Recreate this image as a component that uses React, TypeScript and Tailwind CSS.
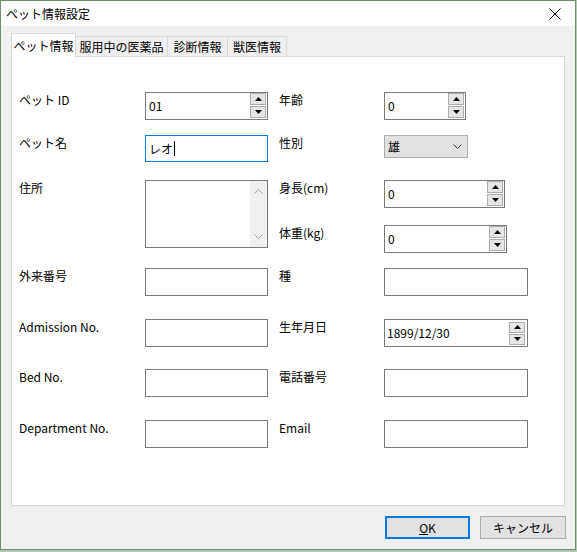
import React from 'react';

const font = { fontFamily: '"Noto Sans CJK JP", "Noto Sans", sans-serif' };

function SpinButtons() {
  return (
    <div className="flex flex-col gap-[1px] pt-[0px] pr-[1px] pb-[1px]">
      <div className="w-[16px] h-[12px] bg-[#e5e5e5] border border-[#adadad] flex items-center justify-center">
        <svg width="7" height="4" viewBox="0 0 7 4"><path d="M0 4 L3.5 0 L7 4 Z" fill="#000" /></svg>
      </div>
      <div className="w-[16px] h-[12px] bg-[#e5e5e5] border border-[#adadad] flex items-center justify-center">
        <svg width="7" height="4" viewBox="0 0 7 4"><path d="M0 0 L3.5 4 L7 0 Z" fill="#000" /></svg>
      </div>
    </div>
  );
}

function SpinBox({ value, width }: { value: string; width: string }) {
  return (
    <div className={`${width} h-[28px] border border-[#7a7a7a] bg-white flex items-center`}>
      <div className="flex-1 pl-[3px] text-[12px] leading-[16px] text-black">{value}</div>
      <SpinButtons />
    </div>
  );
}

function TextBox({ width = 'w-[123px]' }: { width?: string }) {
  return <div className={`${width} h-[28px] border border-[#7a7a7a] bg-white`} />;
}

function Label({ text, width }: { text: string; width: string }) {
  return <div className={`${width} text-[12px] leading-[16px] text-black shrink-0`}>{text}</div>;
}

export default function App() {
  return (
    <div className="w-[577px] h-[552px] bg-[#b4c6b4]" style={font}>
      <div className="w-[576px] h-[550px] border border-[#6f8f6f] bg-[#f0f0f0] flex flex-col">
        {/* Title bar */}
        <div className="h-[25px] bg-white flex items-center justify-between pl-[5px] pr-[14px]">
          <span className="text-[12px] text-black">ペット情報設定</span>
          <svg width="12" height="12" viewBox="0 0 12 12">
            <path d="M0.5 0.5 L11.5 11.5 M11.5 0.5 L0.5 11.5" stroke="#000" strokeWidth="1" />
          </svg>
        </div>

        {/* Tabs */}
        <div className="pl-[10px] mt-[7px] flex items-end h-[23px]">
          <div className="w-[65px] h-[24px] bg-white border border-b-0 border-[#d9d9d9] flex items-center justify-center text-[12px] text-black relative z-10 -mb-[1px]">
            ペット情報
          </div>
          <div className="w-[92px] h-[20px] border border-l-0 border-b-0 border-[#d9d9d9] bg-[#f0f0f0] flex items-center justify-center text-[12px] text-black">
            服用中の医薬品
          </div>
          <div className="w-[60px] h-[20px] border border-l-0 border-b-0 border-[#d9d9d9] bg-[#f0f0f0] flex items-center justify-center text-[12px] text-black">
            診断情報
          </div>
          <div className="w-[59px] h-[20px] border border-l-0 border-b-0 border-[#d9d9d9] bg-[#f0f0f0] flex items-center justify-center text-[12px] text-black">
            獣医情報
          </div>
        </div>

        {/* Panel */}
        <div className="ml-[10px] w-[554px] h-[450px] bg-white border border-[#d9d9d9] pl-[7px] pt-[35px]">
          <div className="flex">
            {/* left column */}
            <div className="w-[260px] flex flex-col">
              <div className="flex">
                <Label text="ペット ID" width="w-[126px]" />
                <SpinBox value="01" width="w-[123px]" />
              </div>
              <div className="flex mt-[15px]">
                <Label text="ペット名" width="w-[126px]" />
                <div className="w-[123px] h-[27px] border border-[#0078d7] bg-white flex items-center pl-[3px]">
                  <span className="text-[12px] leading-[16px] text-black">レオ</span>
                  <span className="w-[1px] h-[15px] bg-black ml-[1px]" />
                </div>
              </div>
              <div className="flex mt-[18px]">
                <Label text="住所" width="w-[126px]" />
                <div className="w-[123px] h-[68px] border border-[#7a7a7a] bg-white flex justify-end">
                  <div className="w-[17px] h-full bg-[#f0f0f0] flex flex-col items-center justify-between py-[8px]">
                    <svg width="9" height="5" viewBox="0 0 9 5"><path d="M0.5 4.5 L4.5 0.5 L8.5 4.5" stroke="#a3a3a3" fill="none" /></svg>
                    <svg width="9" height="5" viewBox="0 0 9 5"><path d="M0.5 0.5 L4.5 4.5 L8.5 0.5" stroke="#a3a3a3" fill="none" /></svg>
                  </div>
                </div>
              </div>
            </div>
            {/* right column */}
            <div className="flex flex-col">
              <div className="flex">
                <Label text="年齢" width="w-[105px]" />
                <SpinBox value="0" width="w-[82px]" />
              </div>
              <div className="flex mt-[15px]">
                <Label text="性別" width="w-[105px]" />
                <div className="w-[84px] h-[23px] border border-[#adadad] bg-[#e1e1e1] flex items-center justify-between pl-[3px] pr-[5px]">
                  <span className="text-[12px] leading-[16px] text-black">雄</span>
                  <svg width="9" height="5" viewBox="0 0 9 5"><path d="M0.5 0.5 L4.5 4.5 L8.5 0.5" stroke="#333" fill="none" /></svg>
                </div>
              </div>
              <div className="flex mt-[22px]">
                <Label text="身長(cm)" width="w-[105px]" />
                <SpinBox value="0" width="w-[121px]" />
              </div>
              <div className="flex mt-[17px]">
                <Label text="体重(kg)" width="w-[105px]" />
                <SpinBox value="0" width="w-[123px]" />
              </div>
            </div>
          </div>

          {/* lower rows */}
          <div className="flex flex-col mt-[15px]">
            <div className="flex">
              <Label text="外来番号" width="w-[126px]" />
              <TextBox />
              <div className="w-[11px]" />
              <Label text="種" width="w-[105px]" />
              <TextBox width="w-[144px]" />
            </div>
            <div className="flex mt-[23px]">
              <Label text="Admission No." width="w-[126px]" />
              <TextBox />
              <div className="w-[11px]" />
              <Label text="生年月日" width="w-[105px]" />
              <div className="w-[144px] h-[28px] border border-[#7a7a7a] bg-white flex items-center">
                <div className="flex-1 pl-[2px] text-[12px] leading-[16px] text-black">1899/12/30</div>
                <div className="pr-[2px]">
                  <div className="flex flex-col gap-[1px]">
                    <div className="w-[16px] h-[11px] bg-[#e5e5e5] border border-[#adadad] flex items-center justify-center">
                      <svg width="7" height="4" viewBox="0 0 7 4"><path d="M0 4 L3.5 0 L7 4 Z" fill="#000" /></svg>
                    </div>
                    <div className="w-[16px] h-[11px] bg-[#e5e5e5] border border-[#adadad] flex items-center justify-center">
                      <svg width="7" height="4" viewBox="0 0 7 4"><path d="M0 0 L3.5 4 L7 0 Z" fill="#000" /></svg>
                    </div>
                  </div>
                </div>
              </div>
            </div>
            <div className="flex mt-[22px]">
              <Label text="Bed No." width="w-[126px]" />
              <TextBox />
              <div className="w-[11px]" />
              <Label text="電話番号" width="w-[105px]" />
              <TextBox width="w-[144px]" />
            </div>
            <div className="flex mt-[23px]">
              <Label text="Department No." width="w-[126px]" />
              <TextBox />
              <div className="w-[11px]" />
              <Label text="Email" width="w-[105px]" />
              <TextBox width="w-[144px]" />
            </div>
          </div>
        </div>

        {/* Buttons */}
        <div className="flex justify-end gap-[10px] mt-[10px] pr-[9px]">
          <button className="w-[85px] h-[23px] border-2 border-[#0078d7] bg-[#e1e1e1] text-[12px] text-black flex items-center justify-center">
            <span><span className="underline">O</span>K</span>
          </button>
          <button className="w-[86px] h-[23px] border border-[#adadad] bg-[#e1e1e1] text-[12px] text-black flex items-center justify-center">
            キャンセル
          </button>
        </div>
      </div>
    </div>
  );
}
